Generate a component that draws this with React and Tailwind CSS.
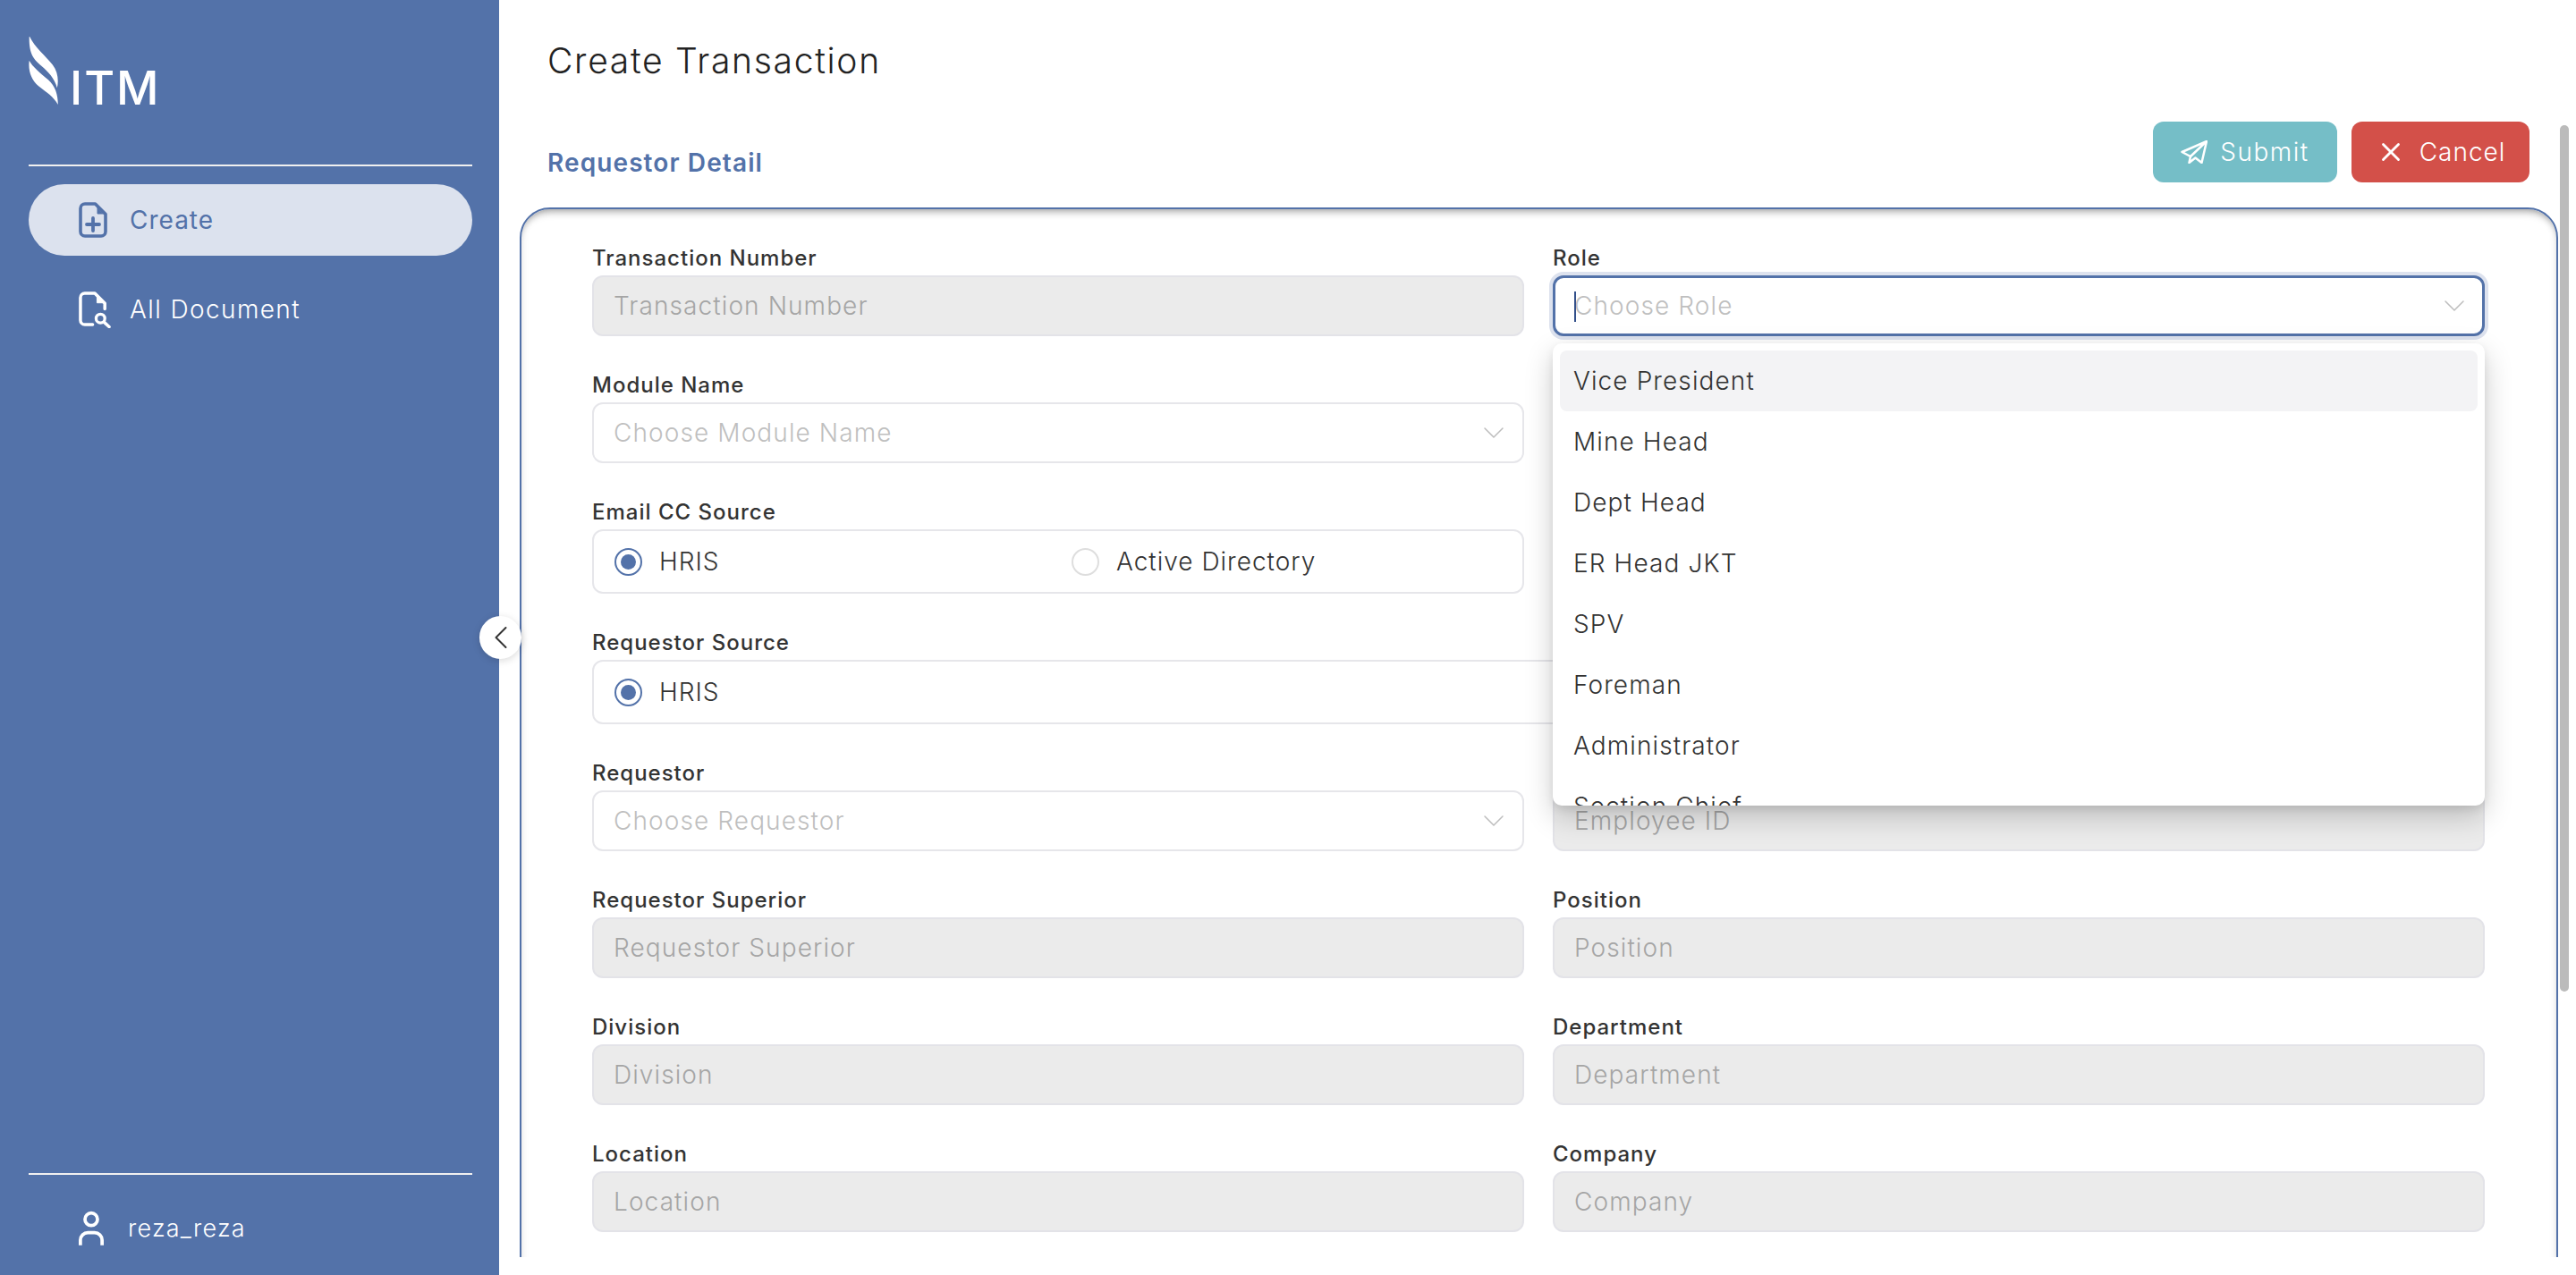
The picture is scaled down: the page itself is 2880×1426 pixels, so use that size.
import React from 'react';
import { ChevronDown, ChevronLeft, X } from 'lucide-react';

const font = 'font-["Inter","Noto_Sans",sans-serif]';
const labelClass = 'text-[24px] leading-[24px] font-medium tracking-[1px] text-[#333] mb-[7px]';

function CreateIcon({ className }) {
  return (
    <svg viewBox="0 0 32 40" className={className} fill="none" stroke="currentColor" strokeWidth="3.6" strokeLinejoin="round" strokeLinecap="round">
      <path d="M7 2h11.500L30 13.500V33a5 5 0 0 1-5 5H7a5 5 0 0 1-5-5V7a5 5 0 0 1 5-5z" />
      <path d="M21 6.500v6.500h6.500z" fill="currentColor" strokeWidth="1" />
      <path d="M16 18v14M9 25h14" strokeWidth="3.8" />
    </svg>
  );
}

function SearchDocIcon({ className }) {
  return (
    <svg viewBox="0 0 37 42" className={className} fill="none" stroke="currentColor" strokeWidth="3.6" strokeLinejoin="round" strokeLinecap="round">
      <path d="M16 38H7a5 5 0 0 1-5-5V7a5 5 0 0 1 5-5h11.500L30 13.500V20" />
      <path d="M21 6.500v6.500h6.500z" fill="currentColor" strokeWidth="1" />
      <circle cx="25" cy="31" r="5" strokeWidth="3.4" />
      <path d="M29.500 35.500L35 40.500" />
    </svg>
  );
}

function PlaneIcon({ className }) {
  return (
    <svg viewBox="0 0 30 26" className={className} fill="none" stroke="currentColor" strokeWidth="2.5" strokeLinejoin="round" strokeLinecap="round">
      <path d="M29 1L1.500 13l9.500 5L29 1z" />
      <path d="M29 1l-5.500 24-7-5.500L9.500 25 11 18" />
    </svg>
  );
}

function Logo() {
  return (
    <div className="flex items-end h-[77px] pl-8">
      <svg viewBox="0 0 33 78" className="w-[33px] h-[77px]" fill="#fff">
        <path d="M1 0C6 11 19 22 27 32c6 8 7 18 5 26-3-11-10-18-18-25C6 26 0 20 .5 0z" />
        <path d="M.5 27C4 34 13 41 22 49c8 7 11 17 11 28-5-9-13-14-22-21C3 49-1 39 .5 27z" />
      </svg>
      <span className="ml-[13px] text-[52px] leading-[38px] h-[38px] text-white font-medium tracking-[2px]">ITM</span>
    </div>
  );
}

function Sidebar() {
  return (
    <aside className="w-[558px] h-full shrink-0 bg-[#5372a9] flex flex-col pt-[41px] pb-[32px] text-white">
      <Logo />
      <div className="ml-8 mr-[30px] mt-[66px] h-[2px] bg-[#f0f0f0]" />
      <nav className="ml-8 mr-[30px] mt-5 flex flex-col gap-5">
        <div className="h-[80px] rounded-[40px] bg-[#dce2ee] text-[#5372a9] flex items-center pl-[56px] gap-[25px]">
          <CreateIcon className="w-[32px] h-[40px]" />
          <span className="text-[28px] tracking-[1px]">Create</span>
        </div>
        <div className="h-[80px] flex items-center pl-[56px] gap-[21px]">
          <SearchDocIcon className="w-[36px] h-[41px]" />
          <span className="text-[28px] font-light tracking-[1.4px]">All Document</span>
        </div>
      </nav>
      <div className="mt-auto ml-8 mr-[30px] h-[2px] bg-[#f0f0f0]" />
      <div className="mx-8 mt-10 flex items-center pl-[56px] gap-[27px]">
        <svg viewBox="0 0 30 42" className="w-[28px] h-[40px]" fill="none" stroke="#fff" strokeWidth="4">
          <circle cx="15" cy="10" r="7.500" />
          <path d="M2 41v-6a9 9 0 0 1 9-9h8a9 9 0 0 1 9 9v6" />
        </svg>
        <span className="text-[27px] font-light tracking-[1.2px]">reza_reza</span>
      </div>
    </aside>
  );
}

function Field({ label }) {
  return (
    <div>
      <div className={labelClass}>{label}</div>
      <div className="h-[68px] rounded-[12px] border-2 border-[#e3e3e8] bg-[#ebebeb] flex items-center px-[22px] text-[28px] tracking-[1.1px] font-light text-[#a5a5a5]">
        {label}
      </div>
    </div>
  );
}

function SelectField({ label, placeholder }) {
  return (
    <div>
      <div className={labelClass}>{label}</div>
      <div className="h-[68px] rounded-[12px] border-2 border-[#e6e6ea] bg-white flex items-center justify-between px-[22px] text-[28px] tracking-[1.1px] font-light text-[#bfbfbf]">
        {placeholder}
        <ChevronDown className="w-10 h-10 -mr-[10px] text-[#bdbdbd]" strokeWidth={0.9} />
      </div>
    </div>
  );
}

function Radio({ label, checked }) {
  return (
    <div className="flex items-center gap-[19px] text-[28px] tracking-[1px] font-light text-[#333]">
      <span className={`w-[31px] h-[31px] rounded-full border-2 flex items-center justify-center ${checked ? 'border-[#5372a9]' : 'border-[#dedede]'}`}>
        {checked && <span className="w-[17px] h-[17px] rounded-full bg-[#5372a9]" />}
      </span>
      {label}
    </div>
  );
}

function RadioField({ label, wide }) {
  return (
    <div className={wide ? 'col-span-2' : ''}>
      <div className={labelClass}>{label}</div>
      <div className="h-[72px] rounded-[12px] border-2 border-[#e6e6ea] bg-white grid grid-cols-[511px_1fr] items-center pl-[23px]">
        <Radio label="HRIS" checked />
        {!wide && <Radio label="Active Directory" />}
      </div>
    </div>
  );
}

const roles = ['Vice President', 'Mine Head', 'Dept Head', 'ER Head JKT', 'SPV', 'Foreman', 'Administrator', 'Section Chief'];

function RoleSelect() {
  return (
    <div className="relative">
      <div className={labelClass}>Role</div>
      <div className="relative h-[68px] rounded-[12px] border-[3px] border-[#5372a9] ring-4 ring-[#dde2ee] bg-white flex items-center justify-between px-[21px] text-[28px] tracking-[1.1px] font-light text-[#bfbfbf]">
        <span className="absolute left-[21px] top-[15px] w-[2px] h-[34px] bg-[#33508a]" />
        Choose Role
        <ChevronDown className="w-10 h-10 -mr-[10px] text-[#bdbdbd]" strokeWidth={0.9} />
      </div>
      <div className="absolute z-10 left-0 right-0 top-[107px] h-[517px] overflow-hidden rounded-[10px] bg-white p-2 shadow-[0_12px_32px_rgba(0,0,0,0.2),0_4px_10px_rgba(0,0,0,0.08)]">
        {roles.map((r, i) => (
          <div key={r} className={`h-[68px] flex items-center px-[15px] rounded-[8px] text-[28px] tracking-[1.1px] font-light text-[#333] ${i === 0 ? 'bg-[#f3f3f5]' : ''}`}>
            {r}
          </div>
        ))}
      </div>
    </div>
  );
}

export default function App() {
  return (
    <div className={`relative w-[2880px] h-[1426px] flex overflow-hidden bg-white ${font}`}>
      <Sidebar />

      {/* collapse toggle */}
      <button className="absolute z-20 left-[536px] top-[689px] w-[47px] h-[48px] rounded-full bg-white shadow-[0_2px_8px_rgba(0,0,0,0.15)] flex items-center justify-center text-[#333]">
        <ChevronLeft className="w-11 h-11" strokeWidth={1.1} />
      </button>

      <main className="flex-1 h-[1406px] overflow-hidden pl-[23px] pr-[20px]">
        <div className="pl-[31px] pr-[32px] flex items-end justify-between h-[204px] relative">
          <h1 className="absolute left-[31px] top-[44px] text-[39px] leading-[48px] font-light tracking-[1.7px] text-[#222]">Create Transaction</h1>
          <div className="text-[28px] leading-[40px] font-semibold tracking-[1.1px] text-[#5372a9] mb-[2px]">Requestor Detail</div>
          <div className="flex gap-4">
            <button className="w-[206px] h-[68px] rounded-[12px] bg-[#75bec7] text-white text-[28px] tracking-[1.5px] font-light flex items-center justify-center gap-[14px]">
              <PlaneIcon className="w-[30px] h-[26px]" />
              Submit
            </button>
            <button className="w-[199px] h-[68px] rounded-[12px] bg-[#d35049] text-white text-[28px] tracking-[1px] font-light flex items-center justify-center gap-[15px]">
              <X className="w-[34px] h-[34px]" strokeWidth={2} />
              Cancel
            </button>
          </div>
        </div>

        <div className="mt-[28px] min-h-[1300px] rounded-[34px] border-2 border-[#5372a9] shadow-[inset_0_10px_10px_-8px_rgba(0,0,0,0.4),inset_6px_0_8px_-6px_rgba(0,0,0,0.12),inset_-6px_0_8px_-6px_rgba(0,0,0,0.12)] pt-[43px] pl-[79px] pr-[80px]">
          <div className="grid grid-cols-2 gap-x-[32px] gap-y-[43px]">
            <Field label="Transaction Number" />
            <RoleSelect />
            <SelectField label="Module Name" placeholder="Choose Module Name" />
            <div />
            <RadioField label="Email CC Source" />
            <div />
            <RadioField label="Requestor Source" wide />
            <SelectField label="Requestor" placeholder="Choose Requestor" />
            <Field label="Employee ID" />
            <Field label="Requestor Superior" />
            <Field label="Position" />
            <Field label="Division" />
            <Field label="Department" />
            <Field label="Location" />
            <Field label="Company" />
          </div>
        </div>
      </main>

      {/* page scrollbar */}
      <div className="absolute left-[2862px] top-[140px] w-[10px] h-[969px] rounded-full bg-[#bbbbbb]" />
    </div>
  );
}
